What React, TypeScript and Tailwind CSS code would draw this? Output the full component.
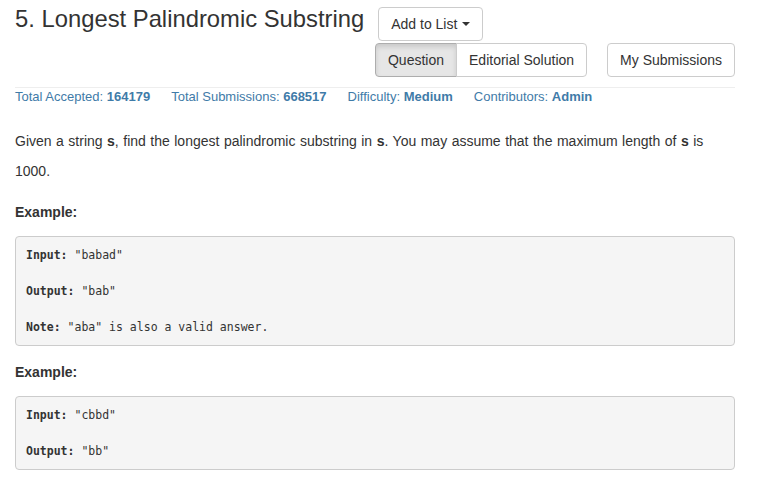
import React from "react";

const sans = { fontFamily: '"Liberation Sans", Arial, sans-serif' };
const mono = { fontFamily: '"DejaVu Sans Mono", Consolas, monospace' };

function Pre({ lines }: { lines: [string, string][] }) {
  return (
    <div
      className="mt-[14px] rounded-[4px] border border-[#cccccc] bg-[#f5f5f5] px-[10px] py-[9px] text-[11.5px] leading-[18px] text-[#333]"
      style={mono}
    >
      {lines.map(([label, rest], i) => (
        <React.Fragment key={i}>
          {i > 0 && <div className="h-[18px]" />}
          <div className="whitespace-pre">
            <b>{label}</b>
            {rest}
          </div>
        </React.Fragment>
      ))}
    </div>
  );
}

export default function App() {
  return (
    <div className="min-h-[483px] w-[764px] bg-white text-[#333]" style={sans}>
      <div className="w-[750px] px-[15px] pt-[6px]">
        <div className="flex items-start">
          <h3 className="m-0 text-[23.8px] leading-[26.4px] font-normal text-[#333]">
            5. Longest Palindromic Substring
          </h3>
          <button className="ml-[14px] mt-[1px] flex h-[34px] items-center rounded-[4px] border border-[#cccccc] bg-white px-[12px] text-[14px] text-[#333]">
            Add to List
            <span className="ml-[5px] inline-block h-0 w-0 border-x-[4px] border-t-[4px] border-x-transparent border-t-[#333]" />
          </button>
        </div>
        <div className="mt-[2px] flex justify-end">
          <div className="flex">
            <button className="h-[34px] rounded-l-[4px] border border-[#adadad] bg-[#e6e6e6] px-[12px] text-[14px] text-[#333] shadow-[inset_0_3px_5px_rgba(0,0,0,0.125)]">
              Question
            </button>
            <button className="-ml-px h-[34px] rounded-r-[4px] border border-[#cccccc] bg-white px-[12px] text-[14px] text-[#333]">
              Editorial Solution
            </button>
          </div>
          <button className="ml-[20px] h-[34px] rounded-[4px] border border-[#cccccc] bg-white px-[12px] text-[14px] text-[#333]">
            My Submissions
          </button>
        </div>
        <div className="mt-[10px] border-t border-[#eeeeee]" />
        <div className="flex text-[13px] leading-[18px] text-[#3f7ba8]">
          <span className="mr-[21px]">
            Total Accepted: <b>164179</b>
          </span>
          <span className="mr-[21px]">
            Total Submissions: <b>668517</b>
          </span>
          <span className="mr-[21px]">
            Difficulty: <b>Medium</b>
          </span>
          <span>
            Contributors: <b>Admin</b>
          </span>
        </div>
        <p className="mt-[20px] text-[14px] leading-[30px] [word-spacing:0.6px]">
          Given a string <b>s</b>, find the longest palindromic substring in <b>s</b>. You may assume that the maximum length of <b>s</b> is 1000.
        </p>
        <p className="mt-[16px] text-[14px] leading-[20px] font-bold">Example:</p>
        <Pre
          lines={[
            ["Input:", ' "babad"'],
            ["Output:", ' "bab"'],
            ["Note:", ' "aba" is also a valid answer.'],
          ]}
        />
        <p className="mt-[16px] text-[14px] leading-[20px] font-bold">Example:</p>
        <div className="mt-[1px]">
          <Pre
            lines={[
              ["Input:", ' "cbbd"'],
              ["Output:", ' "bb"'],
            ]}
          />
        </div>
      </div>
    </div>
  );
}
